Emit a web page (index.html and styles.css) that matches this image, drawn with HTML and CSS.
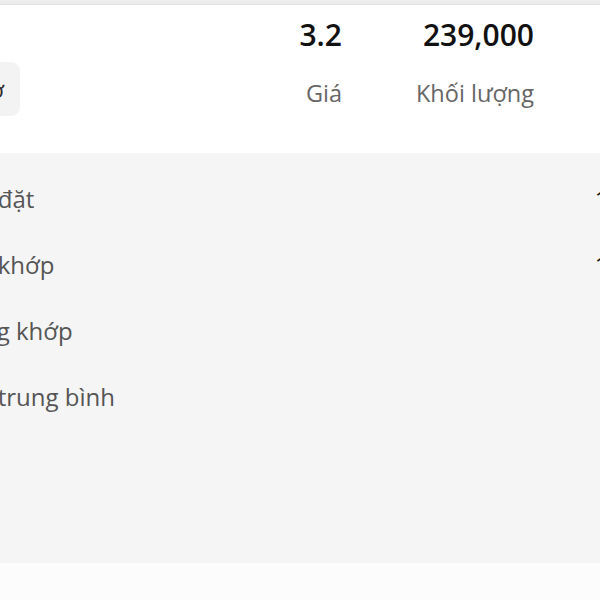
FILE: index.html
```html
<!doctype html>
<html lang="vi">
<head>
  <meta charset="utf-8">
  <title>Chi tiết lệnh</title>
  <meta name="viewport" content="width=device-width, initial-scale=1">
  <link rel="stylesheet" href="styles.css">
</head>
<body>
  <div class="prev-edge"></div>

  <div class="order-card">
    <div class="order-card__head">
      <div class="order-card__btn">Lệnh chờ</div>
      <div class="stat stat--price">
        <div class="stat__value">3.2</div>
        <div class="stat__label">Giá</div>
      </div>
      <div class="stat stat--vol">
        <div class="stat__value">239,000</div>
        <div class="stat__label">Khối lượng</div>
      </div>
    </div>

    <div class="order-card__body">
      <div class="row">
        <span class="row__label">Khối lượng đặt</span>
        <span class="row__value">100</span>
      </div>
      <div class="row">
        <span class="row__label">Khối lượng khớp</span>
        <span class="row__value">100</span>
      </div>
      <div class="row">
        <span class="row__label">Số tiền đang khớp</span>
        <span class="row__value"></span>
      </div>
      <div class="row">
        <span class="row__label">Khối lượng trung bình</span>
        <span class="row__value"></span>
      </div>
    </div>
  </div>
</body>
</html>
```

FILE: styles.css
```css
html {
  background-color: #fcfcfc;
  overflow: hidden;
}

body {
  margin: 0;
  font-family: "Open Sans", "Noto Sans", sans-serif;
  overflow: hidden;
}

.prev-edge {
  height: 5px;
  background-color: #eeeeee;
  border-bottom: 1px solid #e6e6e6;
  box-sizing: border-box;
}

.order-card {
  width: 813px;
  margin-left: -153px;
  box-shadow: 0 6px 10px rgba(0, 0, 0, 0.2);
}

.order-card__head {
  height: 148px;
  background-color: #fff;
  display: flex;
  align-items: flex-start;
  padding-left: 24px;
  box-sizing: border-box;
}

.order-card__btn {
  width: 149px;
  height: 54px;
  margin-top: 57px;
  box-sizing: border-box;
  padding-right: 16px;
  border-radius: 9px;
  background-color: #f3f3f3;
  color: #2a2a2a;
  font-size: 22px;
  display: flex;
  align-items: center;
  justify-content: flex-end;
}

.stat {
  text-align: right;
  margin-top: 8px;
}

.stat--price {
  width: 120px;
  margin-left: 202px;
}

.stat--vol {
  width: 152px;
  margin-left: 40px;
}

.stat__value {
  font-size: 30px;
  font-weight: 600;
  color: #111;
  line-height: 44px;
}

.stat__label {
  font-size: 23.5px;
  color: #666;
  line-height: 30px;
  margin-top: 21px;
}

.order-card__body {
  height: 410px;
  background-color: #f5f5f5;
  padding: 12px 24px 0;
  box-sizing: border-box;
}

.row {
  height: 66px;
  display: flex;
  align-items: center;
  justify-content: space-between;
  font-size: 24px;
  color: #555;
}

.row__value {
  color: #111;
}
```
